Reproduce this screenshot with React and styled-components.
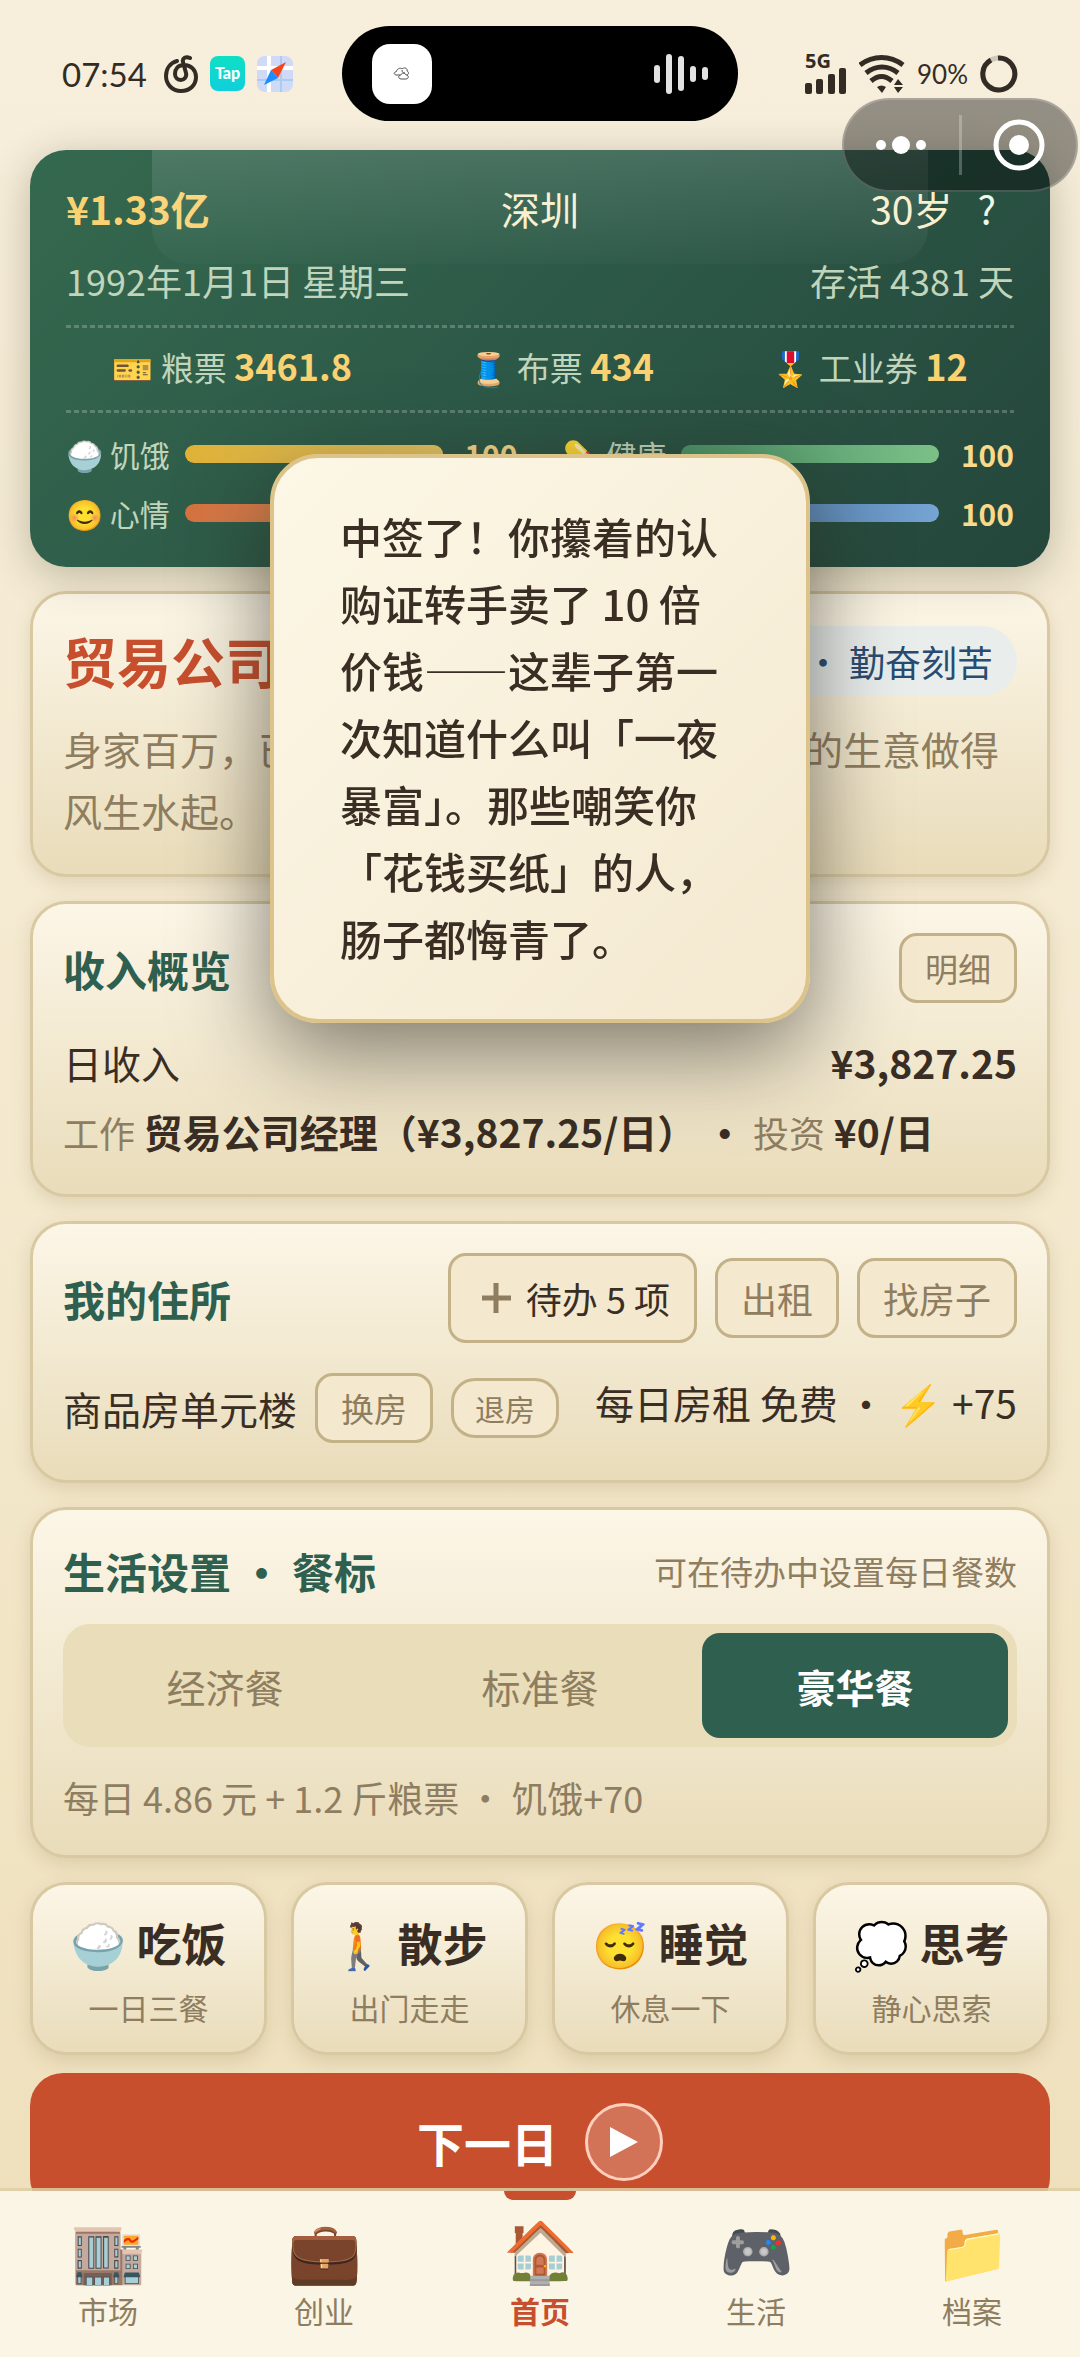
import { useState } from "react";
import styled, { createGlobalStyle, css } from "styled-components";

const GlobalStyle = createGlobalStyle`
  * {
    box-sizing: border-box;
  }
  body {
    margin: 0;
    background: #f5ecd6;
  }
  button {
    font: inherit;
    color: inherit;
    border: 0;
    padding: 0;
    background: none;
    cursor: pointer;
  }
  h1, h2, p {
    margin: 0;
    font-weight: 400;
  }
`;

const stats = [
  { icon: "🍚", label: "饥饿", value: 100, from: "#dfb238", to: "#e8c765" },
  { icon: "💊", label: "健康", value: 100, from: "#4a9468", to: "#7cc088" },
  { icon: "😊", label: "心情", value: 100, from: "#d67340", to: "#e59a68" },
  { icon: "⚡", label: "体力", value: 100, from: "#44719f", to: "#76a4d3" },
];

const tickets = [
  { icon: "🎫", label: "粮票", value: "3461.8" },
  { icon: "🧵", label: "布票", value: "434" },
  { icon: "🎖️", label: "工业券", value: "12" },
];

const meals = ["经济餐", "标准餐", "豪华餐"];

const actions = [
  { icon: "🍚", label: "吃饭", hint: "一日三餐" },
  { icon: "🚶", label: "散步", hint: "出门走走" },
  { icon: "😴", label: "睡觉", hint: "休息一下" },
  { icon: "💭", label: "思考", hint: "静心思索" },
];

const tabs = [
  { icon: "🏬", label: "市场" },
  { icon: "💼", label: "创业" },
  { icon: "🏠", label: "首页" },
  { icon: "🎮", label: "生活" },
  { icon: "📁", label: "档案" },
];

const MusicIcon = () => (
  <svg width="34" height="38" viewBox="0 0 34 38" fill="none" stroke="#332c25" strokeWidth="4" strokeLinecap="round">
    <path d="M13 6C6 8 2 14 2 21c0 8 6 15 15 15s15-6 15-14c0-7-5-12-12-12-6 0-9 4-9 9 0 4 3 6 6 6s6-3 5-7L19 7c-1-4 3-6 7-4" />
  </svg>
);

const CompassIcon = () => (
  <svg width="36" height="36" viewBox="0 0 36 36">
    <defs>
      <clipPath id="map">
        <rect width="36" height="36" rx="8" />
      </clipPath>
    </defs>
    <g clipPath="url(#map)">
      <rect width="36" height="36" fill="#d0daf6" />
      <path d="M0 12h36M12 0v36" stroke="#fff" strokeWidth="4" />
      <path d="M0 24h36M24 0v36" stroke="#a9cdf0" strokeWidth="2" />
    </g>
    <path d="M29 6L14 14l7 8z" fill="#f4451f" />
    <path d="M7 29l7-15 7 8z" fill="#1c8cff" />
  </svg>
);

const CloudIcon = () => (
  <svg width="18" height="14" viewBox="0 0 18 14" fill="none" stroke="#555" strokeWidth="1">
    <path d="M7 8H3C0 7 1 5 3 5c1-3 4-5 6-3M9 2c2-2 6-1 5 2 2 1 2 3 0 4M8 12c-3 0-3-4 0-4 0-2 4-3 5 0 3 0 3 4 0 4zM9 3c0 2 1 3 3 3" />
  </svg>
);

const WaveIcon = () => (
  <svg width="54" height="42" viewBox="0 0 54 42" fill="#e2e2e2">
    <rect x="0" y="12" width="6" height="18" rx="3" />
    <rect x="12" y="1" width="6" height="40" rx="3" />
    <rect x="24" y="3" width="6" height="35" rx="3" />
    <rect x="36" y="13" width="6" height="16" rx="3" />
    <rect x="48" y="14" width="6" height="13" rx="3" />
  </svg>
);

const SignalIcon = () => (
  <svg width="42" height="26" viewBox="0 0 42 26" fill="#332c25">
    <rect x="0" y="15" width="7" height="11" rx="2" />
    <rect x="11" y="11" width="7" height="15" rx="2" />
    <rect x="23" y="6" width="7" height="20" rx="2" />
    <rect x="34" y="0" width="7" height="26" rx="2" />
  </svg>
);

const WifiIcon = () => (
  <svg width="46" height="38" viewBox="0 0 46 38">
    <g fill="none" stroke="#332c25" strokeWidth="5">
      <path d="M1 10C14 0 31 0 44 10" />
      <path d="M7 18c10-8 22-8 32 0" />
      <path d="M12 26c7-6 14-6 21 0" />
    </g>
    <path d="M18 32c3-2 6-2 9 0l-4 6z" fill="#332c25" />
    <path d="M35 30l4-6 5 6zM35 32h9l-5 6z" fill="#332c25" />
  </svg>
);

const BatteryIcon = () => (
  <svg width="38" height="38" viewBox="0 0 38 38" fill="none" strokeWidth="5">
    <circle cx="19" cy="19" r="16" stroke="#cfc8ba" />
    <path d="M18 3a16 16 0 1 1-7 2" stroke="#332c25" />
  </svg>
);

const PlusIcon = () => (
  <svg width="42" height="42" viewBox="0 0 42 42" stroke="#8f7d60" strokeWidth="5">
    <path d="M7 21h29M21 6v30" />
  </svg>
);

const App = () => {
  const [meal, setMeal] = useState("豪华餐");
  const [tab, setTab] = useState("首页");

  return (
    <Shell lang="zh-CN">
      <GlobalStyle />
      <StatusBar>
        <StatusGroup>
          <Clock>07:54</Clock>
          <MusicIcon />
          <TapBadge>Tap</TapBadge>
          <CompassIcon />
        </StatusGroup>
        <Island>
          <IslandApp>
            <CloudIcon />
          </IslandApp>
          <WaveIcon />
        </Island>
        <StatusGroup $end>
          <Network>
            <span>5G</span>
            <SignalIcon />
          </Network>
          <WifiIcon />
          <Percent>90%</Percent>
          <BatteryIcon />
        </StatusGroup>
      </StatusBar>

      <Content>
        <Summary>
          <SummaryTop>
            <Money>¥1.33亿</Money>
            <span>深圳</span>
            <Age>
              <span>30岁</span>
              <HelpButton aria-label="帮助">?</HelpButton>
            </Age>
          </SummaryTop>
          <SummaryDate>
            <span>1992年1月1日 星期三</span>
            <span>存活 4381 天</span>
          </SummaryDate>
          <Tickets>
            {tickets.map(({ icon, label, value }) => (
              <span key={label}>
                {icon} {label} <TicketValue>{value}</TicketValue>
              </span>
            ))}
          </Tickets>
          <Stats>
            {stats.map(({ icon, label, value, from, to }) => (
              <Stat key={label}>
                <span>
                  {icon} {label}
                </span>
                <Track>
                  <Fill $from={from} $to={to} style={{ width: `${value}%` }} />
                </Track>
                <StatValue>{value}</StatValue>
              </Stat>
            ))}
          </Stats>
        </Summary>

        <Card>
          <Row>
            <JobTitle>贸易公司经理</JobTitle>
            <Trait>高中 · 勤奋刻苦</Trait>
          </Row>
          <Description>身家百万，已是城里有名的商人，如今公司的生意做得风生水起。</Description>
        </Card>

        <Card>
          <Row>
            <Heading>收入概览</Heading>
            <Button>明细</Button>
          </Row>
          <Income>
            <Row>
              <span>日收入</span>
              <b>¥3,827.25</b>
            </Row>
            <p>
              <Muted>工作</Muted> <b>贸易公司经理（¥3,827.25/日） · </b>
              <Muted>投资</Muted> <b>¥0/日</b>
            </p>
          </Income>
        </Card>

        <Card>
          <Row>
            <Heading>我的住所</Heading>
            <ButtonGroup>
              <Button $size="large">
                <PlusIcon />
                待办 5 项
              </Button>
              <Button $size="medium">出租</Button>
              <Button $size="medium">找房子</Button>
            </ButtonGroup>
          </Row>
          <Home>
            <ButtonGroup>
              <span>商品房单元楼</span>
              <Button>换房</Button>
              <Button $size="small">退房</Button>
            </ButtonGroup>
            <Rent>每日房租 免费 · ⚡ +75</Rent>
          </Home>
        </Card>

        <Card>
          <Row>
            <Heading>生活设置 · 餐标</Heading>
            <Hint>可在待办中设置每日餐数</Hint>
          </Row>
          <Segments>
            {meals.map((name) => (
              <Segment key={name} $active={name === meal} onClick={() => setMeal(name)}>
                {name}
              </Segment>
            ))}
          </Segments>
          <MealInfo>每日 4.86 元 + 1.2 斤粮票 · 饥饿+70</MealInfo>
        </Card>

        <Actions>
          {actions.map(({ icon, label, hint }) => (
            <Action key={label}>
              <ActionLabel>
                {icon} {label}
              </ActionLabel>
              <ActionHint>{hint}</ActionHint>
            </Action>
          ))}
        </Actions>

        <NextButton>
          下一日
          <PlayCircle>
            <svg width="28" height="30" viewBox="0 0 28 30" fill="#fff">
              <path d="M0 0l28 15L0 30z" />
            </svg>
          </PlayCircle>
        </NextButton>
      </Content>

      <Toast role="status">
        中签了！你攥着的认购证转手卖了 10 倍价钱——这辈子第一次知道什么叫「一夜暴富」。那些嘲笑你「花钱买纸」的人，肠子都悔青了。
      </Toast>

      <Capsule>
        <CapsuleButton aria-label="更多">
          <svg width="50" height="18" viewBox="0 0 50 18" fill="#fff">
            <circle cx="5" cy="9" r="5" />
            <circle cx="25" cy="9" r="9" />
            <circle cx="45" cy="9" r="5" />
          </svg>
        </CapsuleButton>
        <CapsuleLine />
        <CapsuleButton aria-label="关闭">
          <svg width="52" height="52" viewBox="0 0 52 52">
            <circle cx="26" cy="26" r="23" fill="none" stroke="#fff" strokeWidth="5" />
            <circle cx="26" cy="26" r="10" fill="#fff" />
          </svg>
        </CapsuleButton>
      </Capsule>

      <Nav>
        {tabs.map(({ icon, label }) => (
          <Tab key={label} $active={label === tab} onClick={() => setTab(label)}>
            <TabIcon>{icon}</TabIcon>
            {label}
          </Tab>
        ))}
      </Nav>
    </Shell>
  );
};

const Shell = styled.div`
  position: relative;
  height: 100vh;
  overflow-y: auto;
  scrollbar-width: none;
  background: linear-gradient(180deg, #f7eedc 0%, #f4e9ce 50%, #eedfba 100%);
  color: #3a2e24;
  font-family: "Noto Sans CJK SC", sans-serif;
  font-size: 39px;
  line-height: 60px;
`;

const StatusBar = styled.header`
  display: grid;
  grid-template-columns: 1fr auto 1fr;
  align-items: center;
  padding: 26px 62px 29px;
  color: #332c25;
`;

const StatusGroup = styled.div`
  display: flex;
  align-items: center;
  justify-content: ${({ $end }) => ($end ? "flex-end" : "flex-start")};
  gap: 12px;
`;

const Clock = styled.time`
  width: 90px;
  font-family: Lato, sans-serif;
  font-size: 33px;
`;

const Percent = styled.span`
  font-family: Lato, sans-serif;
  font-size: 26px;
`;

const TapBadge = styled.span`
  width: 35px;
  height: 35px;
  border-radius: 8px;
  background: linear-gradient(#0fe0c4, #0fcfdc);
  color: #fff;
  font-family: Lato, sans-serif;
  font-size: 16px;
  font-weight: 900;
  line-height: 34px;
  text-align: center;
`;

const Island = styled.div`
  display: flex;
  align-items: center;
  justify-content: space-between;
  width: 396px;
  height: 95px;
  padding: 0 30px;
  border-radius: 48px;
  background: #000;
`;

const IslandApp = styled.div`
  display: flex;
  align-items: center;
  justify-content: center;
  width: 60px;
  height: 60px;
  border-radius: 18px;
  background: #fff;
`;

const Network = styled.div`
  display: flex;
  flex-direction: column;
  font-family: "Open Sans", sans-serif;
  font-size: 20px;
  font-weight: 700;
  line-height: 14px;
`;

const Content = styled.main`
  display: flex;
  flex-direction: column;
  gap: 24px;
  padding: 0 30px 200px;
`;

const Summary = styled.section`
  position: relative;
  padding: 28px 36px 32px;
  border-radius: 36px;
  background: linear-gradient(135deg, #35694f 0%, #2d5a48 45%, #24463b 100%);
  box-shadow: 0 9px 42px rgba(60, 60, 30, 0.3);
  color: #f8efcf;

  &::before {
    content: "";
    position: absolute;
    top: 0;
    left: 12%;
    right: 12%;
    height: 114px;
    border-radius: 0 0 36px 36px;
    background: linear-gradient(180deg, rgba(255, 255, 255, 0.13), rgba(255, 255, 255, 0.02));
  }
`;

const SummaryTop = styled.div`
  display: grid;
  grid-template-columns: 1fr auto 1fr;
`;

const Money = styled.strong`
  color: #fad272;
`;

const Age = styled.div`
  display: flex;
  justify-content: flex-end;
`;

const HelpButton = styled.button`
  padding: 0 18px 0 25px;
  color: #ecf8ea;
`;

const SummaryDate = styled.div`
  display: flex;
  justify-content: space-between;
  margin: 15px 0 18px;
  color: #c0d5bb;
  font-size: 36px;
  line-height: 54px;
`;

const dashes = css`
  background-image: repeating-linear-gradient(90deg, rgba(255, 255, 255, 0.22) 0 5px, transparent 5px 8px);
  background-repeat: no-repeat;
  background-size: 100% 3px;
`;

const Tickets = styled.div`
  ${dashes}
  display: flex;
  justify-content: space-around;
  gap: 24px;
  padding: 12px 0 14px;
  color: #c0d5bb;
  font-size: 33px;
  line-height: 57px;
`;

const TicketValue = styled.strong`
  color: #fad272;
  font-size: 36px;
`;

const Stats = styled.div`
  ${dashes}
  display: grid;
  grid-template-columns: 1fr 1fr;
  gap: 15px 45px;
  padding-top: 22px;
  color: #c0d5bb;
  font-size: 30px;
  line-height: 44px;
`;

const Stat = styled.div`
  display: flex;
  align-items: center;
  gap: 15px;
`;

const Track = styled.div`
  flex: 1;
  height: 18px;
  border-radius: 9px;
  background: rgba(0, 0, 0, 0.25);
`;

const Fill = styled.div`
  height: 100%;
  border-radius: 9px;
  background: linear-gradient(90deg, ${({ $from }) => $from}, ${({ $to }) => $to});
`;

const StatValue = styled.strong`
  width: 60px;
  color: #fad98a;
  text-align: right;
`;

const panel = css`
  border: 3px solid #d8c9a3;
  border-radius: 36px;
  background: linear-gradient(180deg, #fcf6e7 0%, #e9dcba 100%);
  box-shadow: 0 6px 18px rgba(110, 90, 40, 0.16);
`;

const Card = styled.section`
  ${panel}
  padding: 29px 30px 31px;
`;

const Row = styled.div`
  display: flex;
  align-items: center;
  justify-content: space-between;
`;

const JobTitle = styled.h1`
  color: #c74f2d;
  font-size: 54px;
  font-weight: 700;
  line-height: 76px;
`;

const Trait = styled.span`
  padding: 8px 24px;
  border-radius: 36px;
  background: #e9eeed;
  color: #2a4b70;
  font-size: 36px;
  line-height: 54px;
`;

const Description = styled.p`
  margin: 18px 0 2px;
  color: #8f7d60;
  line-height: 62px;
`;

const Heading = styled.h2`
  color: #2e5f4f;
  font-size: 42px;
  font-weight: 700;
  line-height: 63px;
`;

const buttonSizes = {
  small: css`
    padding: 4px 21px;
    border-radius: 24px;
    font-size: 30px;
    line-height: 46px;
  `,
  base: css`
    padding: 7px 23px;
    font-size: 33px;
    line-height: 50px;
  `,
  medium: css`
    padding: 10px 23px;
    font-size: 36px;
    line-height: 54px;
  `,
  large: css`
    padding: 15px 24px;
    color: #3a2e24;
    font-size: 36px;
    line-height: 54px;
  `,
};

const Button = styled.button`
  display: flex;
  align-items: center;
  gap: 9px;
  border: 3px solid #c3b187;
  border-radius: 18px;
  background: #f4e9ce;
  color: #8f7d60;
  white-space: nowrap;
  ${({ $size = "base" }) => buttonSizes[$size]}
`;

const ButtonGroup = styled.div`
  display: flex;
  align-items: center;
  gap: 18px;
`;

const Income = styled.div`
  display: flex;
  flex-direction: column;
  gap: 9px;
  margin: 29px 0 1px;
`;

const Muted = styled.span`
  color: #8f7d60;
  font-size: 36px;
`;

const Home = styled.div`
  display: flex;
  align-items: flex-start;
  justify-content: space-between;
  padding: 30px 0 6px;
`;

const Rent = styled.span`
  line-height: 58px;
  white-space: nowrap;
`;

const Hint = styled.span`
  color: #8f7d60;
  font-size: 33px;
`;

const Segments = styled.div`
  display: grid;
  grid-template-columns: repeat(3, 1fr);
  gap: 9px;
  margin: 22px 0 23px;
  padding: 9px;
  border-radius: 27px;
  background: #e9ddba;
`;

const Segment = styled.button`
  height: 105px;
  border-radius: 18px;
  background: ${({ $active }) => ($active ? "#2e5f4f" : "transparent")};
  color: ${({ $active }) => ($active ? "#fff" : "#8f7d60")};
  font-weight: ${({ $active }) => ($active ? 700 : 400)};
`;

const MealInfo = styled.p`
  color: #8f7d60;
  font-size: 36px;
  line-height: 54px;
`;

const Actions = styled.div`
  display: grid;
  grid-template-columns: repeat(4, 1fr);
  gap: 24px;
`;

const Action = styled.button`
  ${panel}
  display: flex;
  flex-direction: column;
  align-items: center;
  gap: 6px;
  padding: 22px 0;
`;

const ActionLabel = styled.span`
  font-size: 45px;
  font-weight: 700;
  line-height: 72px;
  white-space: nowrap;
`;

const ActionHint = styled.span`
  color: #8f7d60;
  font-size: 30px;
  line-height: 45px;
`;

const NextButton = styled.button`
  display: flex;
  align-items: center;
  justify-content: center;
  gap: 27px;
  margin-top: -6px;
  padding: 30px;
  border-radius: 33px;
  background: #c74f2d;
  color: #fff;
  font-size: 47px;
  font-weight: 700;
`;

const PlayCircle = styled.span`
  display: flex;
  align-items: center;
  justify-content: center;
  width: 78px;
  height: 78px;
  border: 3px solid #ffcfbd;
  border-radius: 50%;
  background: rgba(255, 255, 255, 0.2);
`;

const Toast = styled.div`
  position: fixed;
  top: 454px;
  left: 25%;
  right: 25%;
  padding: 44px 69px 48px 66px;
  border: 4px solid #dcc38a;
  border-radius: 48px;
  background: linear-gradient(135deg, #fcf7e6, #f4e9d0);
  box-shadow: 0 27px 90px rgba(40, 36, 26, 0.6);
  font-size: 42px;
  font-weight: 500;
  line-height: 67px;
`;

const Capsule = styled.div`
  position: fixed;
  top: 98px;
  right: 2px;
  display: flex;
  align-items: center;
  width: 236px;
  height: 94px;
  border: 2px solid rgba(255, 255, 255, 0.2);
  border-radius: 47px;
  background: rgba(0, 0, 0, 0.4);
`;

const CapsuleButton = styled.button`
  display: flex;
  flex: 1;
  justify-content: center;
`;

const CapsuleLine = styled.span`
  width: 3px;
  height: 60px;
  background: rgba(255, 255, 255, 0.25);
`;

const Nav = styled.nav`
  position: fixed;
  right: 0;
  bottom: 0;
  left: 0;
  display: grid;
  grid-template-columns: repeat(5, 1fr);
  border-top: 3px solid rgba(222, 206, 166, 0.85);
  background: #fbf5e6;
  background-clip: padding-box;
`;

const Tab = styled.button`
  position: relative;
  display: flex;
  flex-direction: column;
  align-items: center;
  gap: 6px;
  padding: 21px 0 24px;
  color: ${({ $active }) => ($active ? "#c74f2d" : "#8f7d60")};
  font-size: 30px;
  font-weight: ${({ $active }) => ($active ? 700 : 400)};
  line-height: 45px;

  &::before {
    content: "";
    display: ${({ $active }) => ($active ? "block" : "none")};
    position: absolute;
    top: 0;
    width: 72px;
    height: 9px;
    border-radius: 0 0 9px 9px;
    background: #c74f2d;
  }
`;

const TabIcon = styled.span`
  font-size: 60px;
  line-height: 70px;
`;

export default App;
